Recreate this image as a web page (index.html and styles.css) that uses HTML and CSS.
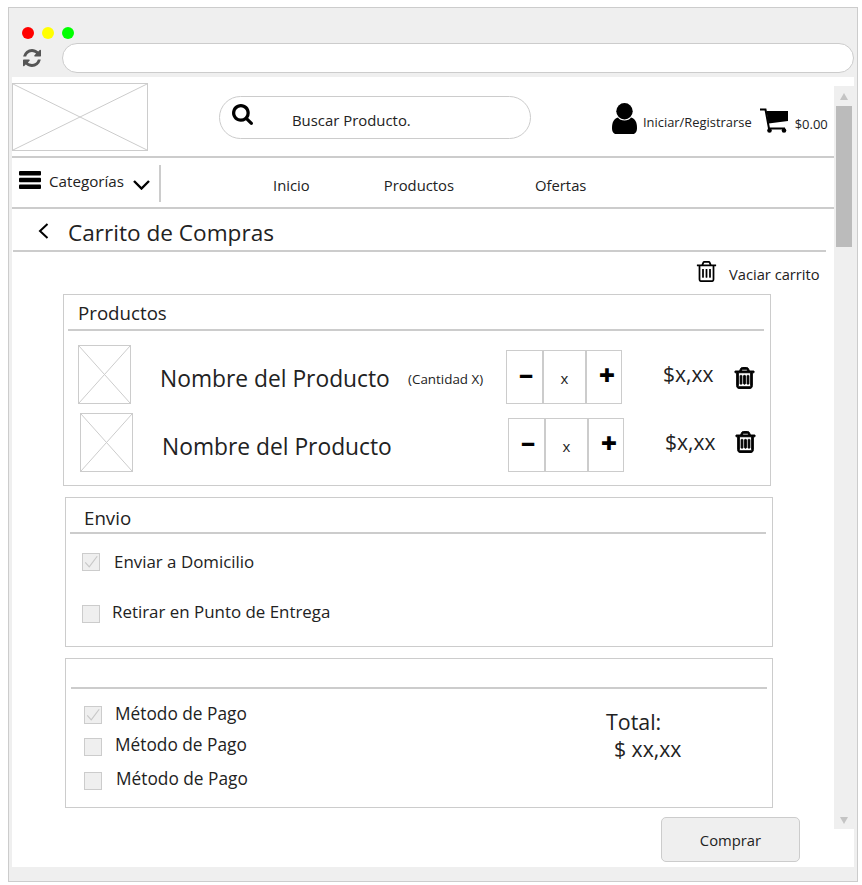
FILE: index.html
```html
<!DOCTYPE html>
<html lang="es">
<head>
<meta charset="utf-8">
<title>Carrito de Compras</title>
<link rel="stylesheet" href="styles.css">
</head>
<body>
<svg class="defs" width="0" height="0" aria-hidden="true">
  <symbol id="i-trash" viewBox="128 128 1536 1536"><path d="M704 736v576q0 14-9 23t-23 9h-64q-14 0-23-9t-9-23v-576q0-14 9-23t23-9h64q14 0 23 9t9 23zm256 0v576q0 14-9 23t-23 9h-64q-14 0-23-9t-9-23v-576q0-14 9-23t23-9h64q14 0 23 9t9 23zm256 0v576q0 14-9 23t-23 9h-64q-14 0-23-9t-9-23v-576q0-14 9-23t23-9h64q14 0 23 9t9 23zm128 724v-948h-896v948q0 22 7 40.5t14.5 27 10.5 8.5h832q3 0 10.5-8.5t14.5-27 7-40.5zm-672-1076h448l-48-117q-7-9-17-11h-317q-10 2-17 11zm928 32v64q0 14-9 23t-23 9h-96v948q0 83-47 143.5t-113 60.5h-832q-66 0-113-58.5t-47-141.5v-952h-96q-14 0-23-9t-9-23v-64q0-14 9-23t23-9h309l70-167q15-37 54-63t79-26h320q40 0 79 26t54 63l70 167h309q14 0 23 9t9 23z"/></symbol>
  <symbol id="i-box" viewBox="0 0 100 100" preserveAspectRatio="none"><path d="M0 0L100 100M100 0L0 100" fill="none" stroke="#ccc" stroke-width="1" vector-effect="non-scaling-stroke"/></symbol>
  <symbol id="i-check" viewBox="0 0 18 18"><path d="M2.5 9.5L7 14.5L16 2.5" fill="none" stroke="#c8c8c8" stroke-width="1.3"/></symbol>
</svg>
<div class="window">
  <div class="chrome">
    <div class="dots"><span class="dot dot-red"></span><span class="dot dot-yellow"></span><span class="dot dot-green"></span></div>
    <div class="toolbar">
      <svg class="icon-reload" viewBox="128 128 1536 1536"><path d="M1639 1056q0 5-1 7-64 268-268 434.5t-478 166.5q-146 0-282.5-55t-243.5-157l-129 129q-19 19-45 19t-45-19-19-45v-448q0-26 19-45t45-19h448q26 0 45 19t19 45-19 45l-137 137q71 66 161 102t187 36q134 0 250-65t186-179q11-17 53-117 8-23 30-23h192q13 0 22.5 9.5t9.5 22.5zm25-800v448q0 26-19 45t-45 19h-448q-26 0-45-19t-19-45 19-45l138-138q-148-137-349-137-134 0-250 65t-186 179q-11 17-53 117-8 23-30 23h-199q-13 0-22.5-9.5t-9.5-22.5v-7q65-268 270-434.5t480-166.5q146 0 284 55.5t245 156.5l130-129q19-19 45-19t45 19 19 45z"/></svg>
      <div class="address"></div>
    </div>
  </div>
  <div class="viewport">
    <main class="page">
      <header class="topbar">
        <svg class="logo"><use href="#i-box"/></svg>
        <div class="search">
          <svg class="icon-search" viewBox="64 128 1664 1664"><path d="M1216 832q0-185-131.5-316.5t-316.5-131.5-316.5 131.5-131.5 316.5 131.5 316.5 316.5 131.5 316.5-131.5 131.5-316.5zm512 832q0 52-38 90t-90 38q-54 0-90-38l-343-342q-179 124-399 124-143 0-273.5-55.5t-225-150-150-225-55.5-273.5 55.5-273.5 150-225 225-150 273.5-55.5 273.5 55.5 225 150 150 225 55.5 273.5q0 220-124 399l343 343q37 37 37 90z"/></svg>
          <span class="search-text">Buscar Producto.</span>
        </div>
        <svg class="icon-user" viewBox="0 0 25 31"><circle cx="12.5" cy="8.2" r="8.2"/><path d="M6 14.5C8 18.5 17 18.5 19 14.5C23 15.5 25 19 25 25C25 28.5 23.5 31 21 31H4C1.5 31 0 28.5 0 25C0 19 2 15.5 6 14.5Z"/></svg>
        <span class="login">Iniciar/Registrarse</span>
        <svg class="icon-cart" viewBox="0 0 28 25"><path d="M0 1.5H5.5L9 20.5H25" fill="none" stroke="#000" stroke-width="2"/><path d="M6.5 3H28V13L8.5 15.5Z"/><circle cx="9.5" cy="22.5" r="2.3"/><circle cx="24" cy="22.5" r="2.3"/></svg>
        <span class="cart-total">$0.00</span>
      </header>
      <nav class="navbar">
        <svg class="icon-bars" viewBox="0 0 22 18"><rect width="22" height="4.4" rx="1"/><rect y="6.8" width="22" height="4.4" rx="1"/><rect y="13.6" width="22" height="4.4" rx="1"/></svg>
        <span class="categories">Categorías</span>
        <svg class="icon-down" viewBox="0 0 17 10"><path d="M1 1L8.5 8.5L16 1" fill="none" stroke="#000" stroke-width="2.4"/></svg>
        <span class="nav-divider"></span>
        <a class="nav-link nav-inicio">Inicio</a>
        <a class="nav-link nav-productos">Productos</a>
        <a class="nav-link nav-ofertas">Ofertas</a>
      </nav>
      <div class="page-title">
        <svg class="icon-back" viewBox="0 0 11 16"><path d="M9.5 1L2 8L9.5 15" fill="none" stroke="#000" stroke-width="2"/></svg>
        <h1 class="title-text">Carrito de Compras</h1>
      </div>
      <div class="empty-row">
        <svg class="icon-trash-light"><use href="#i-trash"/></svg>
        <span class="empty-text">Vaciar carrito</span>
      </div>

      <section class="panel panel-products">
        <h2 class="panel-title">Productos</h2>
        <div class="product">
          <svg class="thumb"><use href="#i-box"/></svg>
          <span class="product-name">Nombre del Producto</span>
          <span class="product-qty">(Cantidad X)</span>
          <div class="stepper"><span class="step step-sign step-minus">−</span><span class="step step-value">x</span><span class="step step-sign step-plus">+</span></div>
          <span class="price">$x,xx</span>
          <svg class="icon-trash"><use href="#i-trash"/></svg>
        </div>
        <div class="product product-second">
          <svg class="thumb"><use href="#i-box"/></svg>
          <span class="product-name">Nombre del Producto</span>
          <span></span>
          <div class="stepper"><span class="step step-sign step-minus">−</span><span class="step step-value">x</span><span class="step step-sign step-plus">+</span></div>
          <span class="price">$x,xx</span>
          <svg class="icon-trash"><use href="#i-trash"/></svg>
        </div>
      </section>

      <section class="panel panel-shipping">
        <h2 class="panel-title">Envio</h2>
        <label class="option option-home"><span class="checkbox"><svg class="check"><use href="#i-check"/></svg></span><span class="option-label">Enviar a Domicilio</span></label>
        <label class="option option-pickup"><span class="checkbox"></span><span class="option-label">Retirar en Punto de Entrega</span></label>
      </section>

      <section class="panel panel-payment">
        <div class="panel-title panel-title-empty"></div>
        <div class="payment-body">
          <div class="methods">
            <label class="method"><span class="checkbox"><svg class="check"><use href="#i-check"/></svg></span><span class="method-label method-label-first">Método de Pago</span></label>
            <label class="method method-second"><span class="checkbox"></span><span class="method-label">Método de Pago</span></label>
            <label class="method method-third"><span class="checkbox"></span><span class="method-label method-label-third">Método de Pago</span></label>
          </div>
          <div class="total">
            <div class="total-label">Total:</div>
            <div class="total-value">$ xx,xx</div>
          </div>
        </div>
      </section>

      <div class="buy-row"><button class="buy" type="button">Comprar</button></div>
    </main>
    <aside class="scrollbar">
      <span class="arrow-up"></span>
      <span class="thumb-bar"></span>
      <span class="arrow-down"></span>
    </aside>
  </div>
</div>
</body>
</html>
```

FILE: styles.css
```css
* { box-sizing: border-box; }
html, body { margin: 0; padding: 0; background: #fff; }
body { font-family: "Open Sans", "Noto Sans", sans-serif; color: #222; padding: 7px 0 0 8px; }
.defs { position: absolute; }
svg { display: block; flex: none; }

.window {
  width: 850px; height: 875px;
  background: #efefef;
  border: 1px solid #ccc;
  padding: 0 3px;
}

.chrome { padding: 19px 0 4px; }
.dots { display: flex; gap: 8px; padding-left: 10px; }
.dot { width: 12px; height: 12px; border-radius: 50%; }
.dot-red { background: #f00; }
.dot-yellow { background: #ff0; }
.dot-green { background: #0f0; }
.toolbar { display: flex; align-items: center; margin-top: 4px; height: 30px; }
.icon-reload { width: 18px; height: 18px; margin-left: 11px; fill: #555; }
.address {
  width: 792px; height: 30px; margin-left: 21px;
  background: #fff; border: 1px solid #ccc; border-radius: 15px;
}

.viewport { display: grid; grid-template-columns: 822px 20px; background: #fff; height: 790px; }
.page { min-width: 0; }

.topbar { display: flex; height: 81px; border-bottom: 2px solid #ccc; padding-top: 6px; }
.logo { width: 136px; height: 68px; border: 1px solid #ccc; }
.search {
  display: flex; width: 312px; height: 43px;
  margin: 13px 0 0 71px;
  border: 1px solid #ccc; border-radius: 22px;
}
.icon-search { width: 21px; height: 21px; margin: 7px 0 0 12px; fill: #000; }
.search-text { margin: 13px 0 0 39px; font-size: 14.9px; line-height: 20px; white-space: nowrap; }
.icon-user { width: 25px; height: 31px; margin: 20px 0 0 81px; fill: #000; }
.login { margin: 30px 0 0 6px; font-size: 12.9px; line-height: 18px; white-space: nowrap; }
.icon-cart { width: 28px; height: 25px; margin: 25px 0 0 8px; fill: #000; }
.cart-total { margin: 32px 0 0 7px; font-size: 13px; line-height: 18px; }

.navbar { display: flex; height: 51px; border-bottom: 2px solid #ccc; }
.icon-bars { width: 22px; height: 18px; margin: 13px 0 0 7px; fill: #000; }
.categories { margin: 13px 0 0 8px; font-size: 15.2px; line-height: 20px; }
.icon-down { width: 17px; height: 10px; margin: 22px 0 0 9px; }
.nav-divider { width: 2px; height: 37px; margin: 7px 0 0 9px; background: #ccc; }
.nav-link { margin-top: 17px; font-size: 14.8px; line-height: 20px; }
.nav-inicio { margin-left: 112px; }
.nav-productos { margin-left: 74px; }
.nav-ofertas { margin-left: 81px; }

.page-title {
  display: flex; width: 813px; height: 43px;
  margin-left: 1px; border-bottom: 2px solid #ccc;
}
.icon-back { width: 11px; height: 16px; margin: 14px 0 0 25px; }
.title-text { margin: 8px 0 0 19px; font-size: 22.6px; line-height: 32px; font-weight: 400; white-space: nowrap; }

.empty-row { display: flex; height: 42px; padding-left: 684px; }
.icon-trash-light { width: 21px; height: 23px; margin-top: 8px; fill: #000; }
.empty-text { margin: 12px 0 0 12px; font-size: 14.7px; line-height: 20px; white-space: nowrap; }

.panel { width: 708px; border: 1px solid #ccc; }
.panel-products { height: 192px; margin-left: 51px; }
.panel-shipping { height: 150px; margin: 11px 0 0 53px; }
.panel-payment { height: 150px; margin: 11px 0 0 53px; }

.panel-title {
  width: 696px; height: 36px; margin: 0 0 0 4px; padding: 6px 0 0 10px;
  border-bottom: 2px solid #ccc;
  font-size: 18.7px; line-height: 24px; font-weight: 400;
}
.panel-shipping .panel-title { padding: 8px 0 0 14px; }
.panel-title-empty { height: 30px; margin-left: 5px; }

.product {
  display: grid;
  grid-template-columns: 82px 248px 98px 157px 71px 21px;
  height: 59px;
  margin: 14px 0 0 14px;
}
.product-second { margin: 9px 0 0 16px; }
.thumb { width: 53px; height: 59px; border: 1px solid #ccc; }
.product-name { margin-top: 18px; font-size: 22.8px; line-height: 32px; white-space: nowrap; }
.product-qty { margin-top: 25px; font-size: 13.4px; line-height: 18px; white-space: nowrap; }
.stepper {
  display: grid; grid-template-columns: 35px 45px 34px;
  width: 116px; height: 54px; margin-top: 5px;
  border: 1px solid #ccc;
}
.step { display: flex; align-items: center; justify-content: center; }
.step-sign { line-height: 1; font-weight: 800; color: #000; }
.step-minus { font-size: 25px; padding: 0 0 4px 3px; }
.step-plus { font-size: 28px; padding: 0 0 7px 6px; }
.step-value {
  border-left: 2px solid #ccc; border-right: 2px solid #ccc;
  font-size: 15px; padding-top: 2px;
}
.price { margin-top: 13px; font-size: 21px; line-height: 32px; white-space: nowrap; }
.icon-trash { width: 21px; height: 24px; margin-top: 21px; fill: #000; stroke: #000; stroke-width: 70; }
.product-second .icon-trash { margin-top: 17px; margin-left: -1px; }

.option { display: flex; height: 18px; }
.option-home { margin: 19px 0 0 16px; }
.option-pickup { margin: 34px 0 0 16px; }
.checkbox {
  display: block; width: 18px; height: 18px; flex: none;
  background: #efefef; border: 1px solid #ccc;
}
.check { width: 16px; height: 16px; }
.option-label { margin: -3px 0 0 14px; font-size: 16.9px; line-height: 24px; white-space: nowrap; }
.option-pickup .option-label { margin: -5px 0 0 12px; }

.payment-body { display: flex; }
.methods { width: 521px; padding: 17px 0 0 18px; }
.method { display: flex; height: 18px; }
.method-second { margin-top: 14px; }
.method-third { margin-top: 16px; }
.method-label { margin: -5px 0 0 13px; font-size: 17.3px; line-height: 24px; white-space: nowrap; }
.method-label-first { margin-top: -4px; }
.method-label-third { margin: -5px 0 0 14px; }
.total { padding-top: 19px; margin-left: 19px; }
.total-label { font-size: 21.4px; line-height: 28px; }
.total-value { margin: -1px 0 0 8px; font-size: 21.2px; line-height: 28px; white-space: nowrap; }

.buy-row { padding: 9px 0 0 649px; }
.buy {
  width: 139px; height: 45px; padding: 0;
  background: #efefef; border: 1px solid #ccc; border-radius: 5px;
  font: 400 14.8px/20px "Open Sans", "Noto Sans", sans-serif; color: #222;
}

.scrollbar {
  display: flex; flex-direction: column; align-items: center;
  height: 743px; margin-top: 9px;
  background: #efefef;
}
.arrow-up { margin-top: 7px; border: 4px solid transparent; border-top: 0; border-bottom: 7px solid #c4c4c4; }
.thumb-bar { width: 16px; height: 141px; margin-top: 6px; background: #bbb; }
.arrow-down { margin-top: auto; margin-bottom: 5px; border: 4px solid transparent; border-bottom: 0; border-top: 7px solid #c4c4c4; }
```
